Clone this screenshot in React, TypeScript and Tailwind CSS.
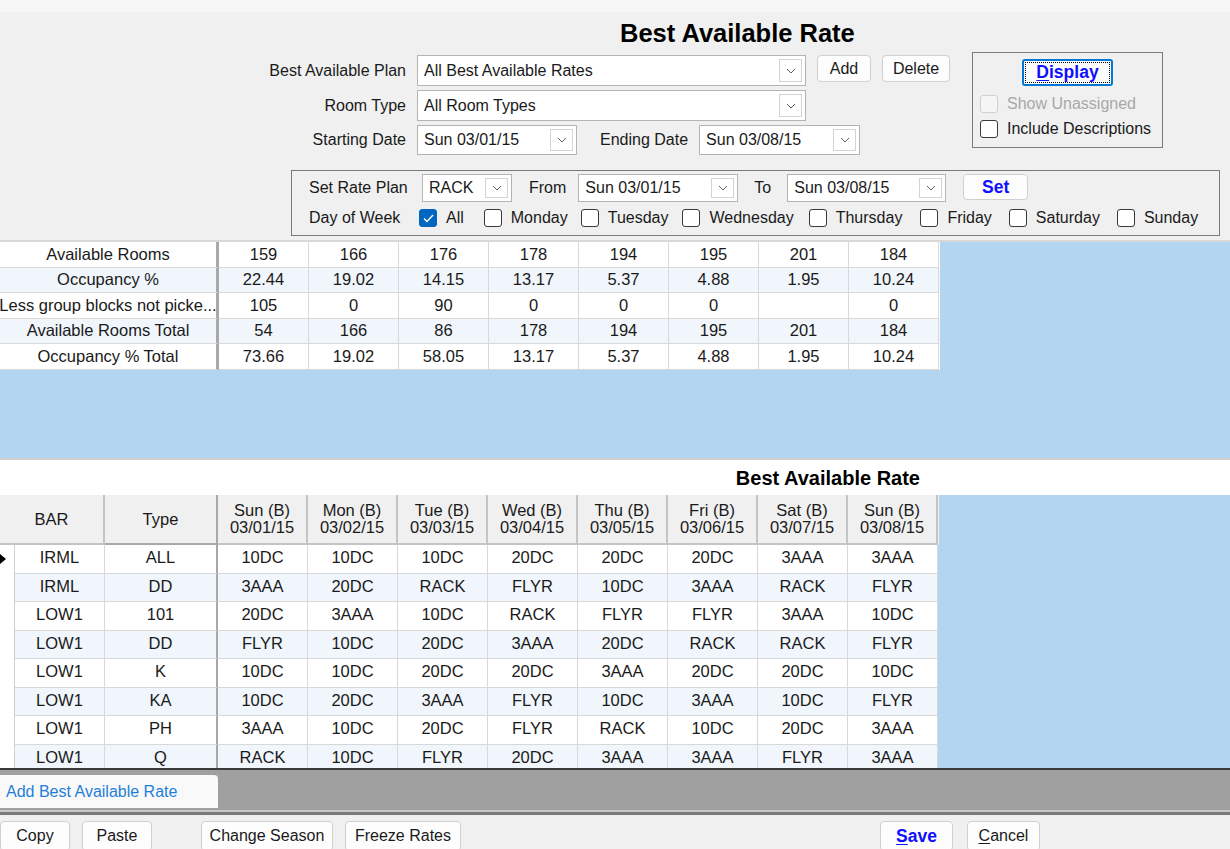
import React from 'react';

const font = "font-['Liberation_Sans',Arial,sans-serif]";

function Chevron() {
  return (
    <svg width="10" height="6" viewBox="0 0 10 6" fill="none">
      <path d="M1 1 L5 5 L9 1" stroke="#606060" strokeWidth="1" />
    </svg>
  );
}

function Combo({ value, className }: { value: string; className: string }) {
  return (
    <div className={`flex items-center justify-between border border-[#b4b4b4] bg-white ${className}`}>
      <span className="pl-[6px] whitespace-nowrap">{value}</span>
      <div className="mr-[3px] flex h-[calc(100%-6px)] w-[23px] items-center justify-center border border-[#d4d4d4] bg-white">
        <Chevron />
      </div>
    </div>
  );
}

function Btn({ children, className }: { children: React.ReactNode; className: string }) {
  return (
    <div
      className={`flex items-center justify-center rounded-[4px] border border-[#d0d0d0] bg-[#fdfdfd] ${className}`}
    >
      {children}
    </div>
  );
}

function Check({ checked, disabled, label }: { checked?: boolean; disabled?: boolean; label: string }) {
  return (
    <div className="flex h-[22px] items-center">
      <div
        className={`flex h-[18px] w-[18px] items-center justify-center rounded-[3px] border ${
          checked
            ? 'border-[#0067c0] bg-[#0067c0]'
            : disabled
              ? 'border-[#d0d0d0] bg-[#f5f5f5]'
              : 'border-[#3a3a3a] bg-white'
        }`}
      >
        {checked && (
          <svg width="11" height="9" viewBox="0 0 11 9" fill="none">
            <path d="M1 4.5 L4 7.5 L10 1" stroke="white" strokeWidth="1.4" />
          </svg>
        )}
      </div>
      <span className={`ml-[9px] ${disabled ? 'text-[#a8a8a8]' : ''}`}>{label}</span>
    </div>
  );
}

const summary = [
  ['Available Rooms', '159', '166', '176', '178', '194', '195', '201', '184'],
  ['Occupancy %', '22.44', '19.02', '14.15', '13.17', '5.37', '4.88', '1.95', '10.24'],
  ['Less group blocks not picke...', '105', '0', '90', '0', '0', '0', '', '0'],
  ['Available Rooms Total', '54', '166', '86', '178', '194', '195', '201', '184'],
  ['Occupancy % Total', '73.66', '19.02', '58.05', '13.17', '5.37', '4.88', '1.95', '10.24'],
];

const headers = [
  ['Sun (B)', '03/01/15'],
  ['Mon (B)', '03/02/15'],
  ['Tue (B)', '03/03/15'],
  ['Wed (B)', '03/04/15'],
  ['Thu (B)', '03/05/15'],
  ['Fri (B)', '03/06/15'],
  ['Sat (B)', '03/07/15'],
  ['Sun (B)', '03/08/15'],
];

const rates = [
  ['IRML', 'ALL', '10DC', '10DC', '10DC', '20DC', '20DC', '20DC', '3AAA', '3AAA'],
  ['IRML', 'DD', '3AAA', '20DC', 'RACK', 'FLYR', '10DC', '3AAA', 'RACK', 'FLYR'],
  ['LOW1', '101', '20DC', '3AAA', '10DC', 'RACK', 'FLYR', 'FLYR', '3AAA', '10DC'],
  ['LOW1', 'DD', 'FLYR', '10DC', '20DC', '3AAA', '20DC', 'RACK', 'RACK', 'FLYR'],
  ['LOW1', 'K', '10DC', '10DC', '20DC', '20DC', '3AAA', '20DC', '20DC', '10DC'],
  ['LOW1', 'KA', '10DC', '20DC', '3AAA', 'FLYR', '10DC', '3AAA', '10DC', 'FLYR'],
  ['LOW1', 'PH', '3AAA', '10DC', '20DC', 'FLYR', 'RACK', '10DC', '20DC', '3AAA'],
  ['LOW1', 'Q', 'RACK', '10DC', 'FLYR', '20DC', '3AAA', '3AAA', 'FLYR', '3AAA'],
];

export default function App() {
  return (
    <div className={`${font} flex h-[849px] w-[1230px] flex-col overflow-hidden bg-[#f0f0f0] text-[16px] text-[#1a1a1a]`}>
      {/* header form */}
      <div className="flex h-[240px] shrink-0 flex-col">
        <div className="h-[12px] bg-[#f6f6f6]" />
        <div className="h-[39px] pl-[620px] pt-[6px] text-[25.5px] font-bold leading-[30px] text-black">
          Best Available Rate
        </div>
        <div className="flex">
          <div className="flex flex-col pt-[4px]">
            <div className="flex h-[31px] items-center">
              <div className="w-[406px] text-right">Best Available Plan</div>
              <Combo value="All Best Available Rates" className="ml-[11px] h-[31px] w-[389px]" />
              <Btn className="ml-[11px] h-[27px] w-[54px] self-start">Add</Btn>
              <Btn className="ml-[11px] h-[27px] w-[68px] self-start">Delete</Btn>
            </div>
            <div className="mt-[4px] flex h-[31px] items-center">
              <div className="w-[406px] text-right">Room Type</div>
              <Combo value="All Room Types" className="ml-[11px] h-[31px] w-[389px]" />
            </div>
            <div className="mt-[4px] flex h-[30px] items-center">
              <div className="w-[406px] text-right">Starting Date</div>
              <Combo value="Sun 03/01/15" className="ml-[11px] h-[30px] w-[160px]" />
              <div className="ml-[23px]">Ending Date</div>
              <Combo value="Sun 03/08/15" className="ml-[11px] h-[30px] w-[161px]" />
            </div>
          </div>
          <div className="ml-[22px] mt-[1px] flex h-[96px] w-[191px] flex-col border border-[#7a7a7a]">
            <div className="mt-[6px] flex justify-center">
              <div className="flex h-[27px] w-[91px] items-center justify-center rounded-[3px] border-2 border-[#0078d4] bg-[#fdfdfd]">
                <div className="flex h-[21px] w-[85px] items-center justify-center border border-dotted border-black text-[17.5px] font-bold text-[#1010ff]">
                  <span className="underline decoration-1 underline-offset-2">D</span>isplay
                </div>
              </div>
            </div>
            <div className="ml-[7px] mt-[7px]">
              <Check disabled label="Show Unassigned" />
            </div>
            <div className="ml-[7px] mt-[3px]">
              <Check label="Include Descriptions" />
            </div>
          </div>
        </div>
        <div className="ml-[291px] mt-[15px] flex h-[66px] w-[929px] flex-col border border-[#7a7a7a] pl-[17px]">
          <div className="mt-[3px] flex h-[28px] items-center">
            <div className="w-[102px]">Set Rate Plan</div>
            <Combo value="RACK" className="ml-[11px] h-[28px] w-[90px]" />
            <div className="ml-[17px]">From</div>
            <Combo value="Sun 03/01/15" className="ml-[12px] h-[28px] w-[160px]" />
            <div className="ml-[16px]">To</div>
            <Combo value="Sun 03/08/15" className="ml-[16px] h-[28px] w-[159px]" />
            <Btn className="ml-[17px] h-[26px] w-[65px] self-start text-[17.5px] font-bold text-[#1010ff]">Set</Btn>
          </div>
          <div className="mt-[2px] flex h-[28px] items-center">
            <div className="w-[110px]">Day of Week</div>
            <Check checked label="All" />
            <div className="ml-[20px]">
              <Check label="Monday" />
            </div>
            <div className="ml-[13px]">
              <Check label="Tuesday" />
            </div>
            <div className="ml-[14px]">
              <Check label="Wednesday" />
            </div>
            <div className="ml-[15px]">
              <Check label="Thursday" />
            </div>
            <div className="ml-[18px]">
              <Check label="Friday" />
            </div>
            <div className="ml-[17px]">
              <Check label="Saturday" />
            </div>
            <div className="ml-[17px]">
              <Check label="Sunday" />
            </div>
          </div>
        </div>
      </div>

      {/* summary grid */}
      <div className="h-[218px] shrink-0 border-t-2 border-[#d8d8d8] bg-[#b3d5f0] text-[16.5px]">
        <div className="flex w-[940px] flex-col">
          {summary.map((r, i) => (
            <div key={i} className={`flex h-[25.5px] ${i % 2 ? 'bg-[#f0f6fc]' : 'bg-white'}`}>
              {r.map((c, j) => (
                <div
                  key={j}
                  className={`flex items-center justify-center overflow-hidden whitespace-nowrap border-b border-[#d8d8d8] ${
                    j === 0 ? 'w-[219px] border-r-[3px] border-r-[#a8a8a8]' : 'w-[90px] border-r'
                  }`}
                >
                  {c}
                </div>
              ))}
            </div>
          ))}
        </div>
      </div>

      <div className="h-[2px] shrink-0 bg-[#d0d0d0]" />
      <div className="flex h-[35px] shrink-0 items-center bg-white">
        <div className="w-[920px] text-right text-[20px] font-bold text-black">Best Available Rate</div>
      </div>

      {/* rates grid */}
      <div className="h-[273px] shrink-0 overflow-hidden bg-[#b3d5f0] text-[16.5px]">
        <div className="flex w-[939px] flex-col">
          <div className="flex h-[50px] bg-[#f0f0f0] leading-[17px]">
            <div className="flex w-[105px] items-center justify-center border-r-2 border-b-2 border-[#c4c4c4]">BAR</div>
            <div className="flex w-[113px] items-center justify-center border-r-2 border-b-2 border-[#a8a8a8]">Type</div>
            {headers.map((h, i) => (
              <div
                key={i}
                className="flex w-[90px] flex-col items-center justify-center border-r-2 border-b-2 border-[#c4c4c4]"
              >
                <span>{h[0]}</span>
                <span>{h[1]}</span>
              </div>
            ))}
          </div>
          {rates.map((r, i) => (
            <div key={i} className="flex h-[28.5px]">
              <div className="relative w-[15px] shrink-0 border-r border-[#d0d0d0] bg-white">
                {i === 0 && (
                  <svg className="absolute left-0 top-[9px]" width="6" height="10" viewBox="0 0 6 10">
                    <path d="M0 0 L6 5 L0 10 Z" fill="black" />
                  </svg>
                )}
              </div>
              {r.map((c, j) => (
                <div
                  key={j}
                  className={`flex items-center justify-center border-b border-[#d8d8d8] pb-[2px] ${
                    i % 2 ? 'bg-[#f0f6fc]' : 'bg-white'
                  } ${
                    j === 0
                      ? 'w-[90px] border-r'
                      : j === 1
                        ? 'w-[113px] border-r-2 border-r-[#a8a8a8]'
                        : 'w-[90px] border-r'
                  }`}
                >
                  {c}
                </div>
              ))}
            </div>
          ))}
        </div>
      </div>

      <div className="h-[2px] shrink-0 bg-[#3a3a3a]" />
      <div className="flex h-[40px] shrink-0 items-end bg-[#a0a0a0]">
        <div className="mb-[2px] flex h-[33px] w-[218px] items-center rounded-tr-[4px] bg-[#f9f9f9] pl-[6px] text-[#1f7fd8]">
          Add Best Available Rate
        </div>
      </div>
      <div className="h-[2px] shrink-0 bg-[#c8c8c8]" />
      <div className="h-[3px] shrink-0 bg-[#7a7a7a]" />
      <div className="flex flex-1 items-start pt-[6px]">
        <Btn className="h-[30px] w-[70px]">Copy</Btn>
        <Btn className="ml-[12px] h-[30px] w-[70px]">Paste</Btn>
        <Btn className="ml-[49px] h-[30px] w-[132px]">Change Season</Btn>
        <Btn className="ml-[12px] h-[30px] w-[116px]">Freeze Rates</Btn>
        <Btn className="ml-[419px] h-[30px] w-[73px] text-[17.5px] font-bold text-[#1010ff]">
          <span className="underline decoration-1 underline-offset-2">S</span>ave
        </Btn>
        <Btn className="ml-[14px] h-[30px] w-[73px]">
          <span className="underline decoration-1 underline-offset-2">C</span>ancel
        </Btn>
      </div>
    </div>
  );
}
